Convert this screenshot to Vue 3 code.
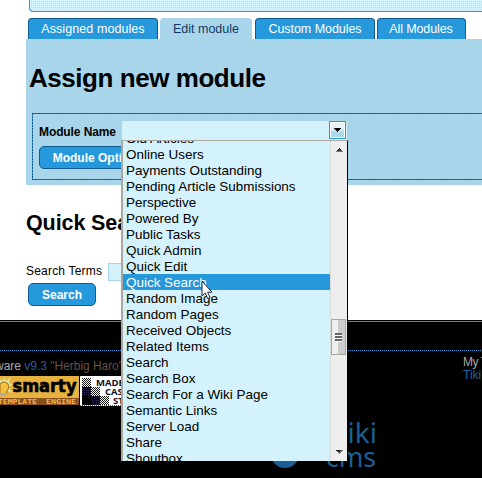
<script setup>
const tabs = [
  { label: 'Assigned modules', size: 'assigned' },
  { label: 'Edit module', size: 'edit' },
  { label: 'Custom Modules', size: 'custom' },
  { label: 'All Modules', size: 'all' },
]
const options = [
  'Old Articles', 'Online Users', 'Payments Outstanding', 'Pending Article Submissions',
  'Perspective', 'Powered By', 'Public Tasks', 'Quick Admin', 'Quick Edit', 'Quick Search',
  'Random Image', 'Random Pages', 'Received Objects', 'Related Items', 'Search', 'Search Box',
  'Search For a Wiki Page', 'Semantic Links', 'Server Load', 'Share', 'Shoutbox',
]
const selected = 'Quick Search'
</script>

<template>
  <div class="page">
    <div class="notice"></div>
    <nav class="tabs">
      <a v-for="t in tabs" :key="t.label" class="tab" :class="t.size">{{ t.label }}</a>
    </nav>
    <section class="panel">
      <h1>Assign new module</h1>
      <div class="fieldset">
        <div class="row">
          <label>Module Name</label>
          <div class="select">
            <span class="drop">
              <svg width="7" height="4" viewBox="0 0 7 4" shape-rendering="crispEdges"><path d="M0 0h7v1H6v1H5v1H4v1H3V3H2V2H1V1H0z" /></svg>
            </span>
            <div class="popup">
              <div class="list">
                <div v-for="o in options" :key="o" class="option" :class="{ active: o === selected }"><span>{{ o }}</span></div>
              </div>
              <div class="scroll">
                <svg class="arrow" width="7" height="4" viewBox="0 0 7 4"><path d="M3 0h1v1h1v1h1v1h1v1H0V3h1V2h1V1h1z" fill="#777" /><path d="M3 0h1v1h1v2H1V2h1V1h1z" fill="#233" /></svg>
                <span class="thumb"><i></i><i></i><i></i></span>
                <svg class="arrow down" width="7" height="4" viewBox="0 0 7 4"><path d="M0 0h7v1H6v1H5v1H4v1H3V3H2V2H1V1H0z" fill="#777" /><path d="M0 0h5v1H4v1H2V1H0z" fill="#222" /></svg>
              </div>
              <svg class="cursor" width="13" height="20" viewBox="0 0 13 20"><path d="M1 1v15l3.2-3 2.5 5.6 2.4-1.1-2.5-5.3H11z" fill="#fff" stroke="#23233f" stroke-width="1" /></svg>
            </div>
          </div>
        </div>
        <button class="button options">Module Options</button>
      </div>
    </section>
    <section class="search">
      <h2>Quick Search</h2>
      <div class="terms"><span>Search Terms</span><span class="input"></span></div>
      <button class="button go">Search</button>
    </section>
    <footer>
      <div class="divider"></div>
      <div class="columns">
        <div class="left">
          <p class="powered">ware <span>v9.3 <em>"Herbig Haro"</em></span></p>
          <div class="badges">
            <svg width="79" height="29" viewBox="0 0 79 29">
              <rect width="79" height="29" fill="#e7b23e" />
              <rect y="22" width="79" height="7" fill="#89501d" />
              <path d="M0 3l3 2 1-5 2 5 5-4-2 6 4 1-4 3 3 6-5-2-1 5H0z" fill="#d9e5a0" />
              <path d="M0 8q4-4 8 0 2 4-1 7l-1 3H0z" fill="#f1c23e" stroke="#a66b20" />
              <path d="M0 17h6v3H0z" fill="#a8acb0" />
              <text x="12.5" y="16" textLength="64" lengthAdjust="spacingAndGlyphs" class="smarty">smarty</text>
              <text x="-2" y="28" textLength="39" lengthAdjust="spacingAndGlyphs" class="engine">TEMPLATE</text>
              <text x="46" y="28" textLength="30" lengthAdjust="spacingAndGlyphs" class="engine">ENGINE</text>
            </svg>
            <svg width="88" height="30" viewBox="0 0 88 30" shape-rendering="crispEdges">
              <defs>
                <pattern id="check" width="2" height="2" patternUnits="userSpaceOnUse"><rect width="2" height="2" fill="#fff" /><path d="M0 0h1v1H0zM1 1h1v1H1z" fill="#111" /></pattern>
                <pattern id="violet" width="4" height="4" patternUnits="userSpaceOnUse"><rect width="4" height="4" fill="#08000e" /><path d="M0 0h1v1H0zM2 2h1v1H2z" fill="#46203e" /><path d="M2 0h1v1H2zM0 2h1v1H0z" fill="#123858" /></pattern>
              </defs>
              <rect width="88" height="30" fill="#fff" />
              <rect x="2" y="2" width="9" height="9" fill="url(#check)" />
              <rect x="2" y="11" width="9" height="9" fill="url(#violet)" />
              <rect x="11" y="11" width="9" height="9" fill="url(#check)" />
              <path d="M2 20h9v9H2z" />
              <rect x="11" y="20" width="9" height="9" fill="url(#violet)" />
              <rect x="20" y="20" width="9" height="9" fill="url(#check)" />
              <path d="M0 29.5h88" stroke="#67466b" stroke-dasharray="1 1" />
              <text x="16" y="9.5" class="made">MADE WITH</text>
              <text x="25" y="18.5" class="made">CASCADING</text>
              <text x="33" y="27.5" class="made">STYLE</text>
            </svg>
          </div>
        </div>
        <div class="theme">My Theme<br /><span>Tiki</span></div>
      </div>
      <svg class="logo" width="140" height="58" viewBox="0 0 140 58">
        <circle cx="20" cy="34" r="14" fill="#1c5f95" />
        <text x="67" y="23" textLength="45" lengthAdjust="spacingAndGlyphs" class="tiki">Tiki</text>
        <text x="61" y="47" textLength="50" lengthAdjust="spacingAndGlyphs" class="tiki">cms</text>
        <text x="65" y="67" textLength="68" lengthAdjust="spacingAndGlyphs" class="group">groupware</text>
      </svg>
    </footer>
  </div>
</template>

<style>
body { margin: 0; overflow: hidden; background: #fff; }
</style>
<style scoped>
* { box-sizing: border-box; }
.page { width: 482px; height: 478px; overflow: hidden; display: flex; flex-direction: column; font: 12px/16px "Liberation Sans", Arial, sans-serif; color: #000; }
.notice { height: 12px; flex: none; margin: 0 -5px 0 29px; border: 1px solid #2698dc; border-top: 0; border-radius: 0 0 4px 4px; background: conic-gradient(#d4f2fb 25%, #b2dcef 0 50%, #d4f2fb 0) 0 0 / 2px 2px; }
.tabs { display: flex; height: 21px; flex: none; margin: 6px 0 0 28px; }
.tab { height: 21px; border: 1px solid #105b91; border-bottom: 0; border-radius: 4px 4px 0 0; background: #2698dc; color: #fff; font-size: 12.5px; line-height: 20px; text-align: center; white-space: nowrap; }
.assigned { width: 130px; margin-right: 2px; letter-spacing: .08px; }
.edit { width: 92px; margin-right: 3px; background: #a9d5eb; border-color: #a9d5eb; color: #123a66; }
.custom { width: 120px; margin-right: 2px; letter-spacing: -.05px; }
.all { width: 89px; letter-spacing: -.1px; padding-right: 1px; }
.panel { height: 146px; flex: none; margin-left: 26px; background: #a9d5eb; padding: 24px 0 0 6px; }
h1 { margin: 0 0 20px -3px; font-size: 26px; line-height: 30px; letter-spacing: -.45px; }
.fieldset { height: 67px; margin-right: -5px; padding: 8px 0 0 7px; background:
  repeating-linear-gradient(90deg, #105b91 0 2px, #2c82b8 2px 3px) 0 0 / 100% 1px no-repeat,
  repeating-linear-gradient(90deg, #105b91 0 2px, #2c82b8 2px 3px) 0 100% / 100% 1px no-repeat,
  repeating-linear-gradient(#105b91 0 2px, #4b9cca 2px 3px) 0 0 / 1px 100% no-repeat; }
.row { display: flex; height: 19px; }
label { width: 83px; flex: none; font-weight: bold; font-size: 12px; line-height: 22px; letter-spacing: -.1px; }
.select { position: relative; width: 225px; height: 19px; background: #d4f2fb; display: flex; justify-content: flex-end; }
.drop { width: 17px; height: 18px; margin-right: 1px; border: 1px solid #2698dc; background: linear-gradient(#e7f5fa 35%, #add8ec 65%); box-shadow: inset 0 0 0 1px #fff; display: flex; align-items: center; justify-content: center; }
.popup { position: absolute; z-index: 2; left: -1px; top: 19px; width: 227px; height: 321px; background: #d4f2fb; border: 1px solid #aaa6a0; border-left: 2px solid #aaa6a0; border-bottom: 0; border-right: 1px solid #000; display: flex; }
.list { width: 207px; height: 320px; overflow: hidden; font-size: 13.45px; display: flex; flex-direction: column; }
.option { flex: none; height: 16px; line-height: 18px; padding-left: 3px; white-space: nowrap; }
.option:first-child { margin-top: -11px; }
.active { background: #2698dc; color: #fff; }
.scroll { width: 17px; height: 320px; background: #eee; border-left: 1px dotted #c8c8c8; display: flex; flex-direction: column; align-items: center; justify-content: space-between; padding: 7px 0; }
.thumb { width: 15px; height: 36px; margin-right: 1px; margin-top: 164px; margin-bottom: 92px; border: 1px solid #aaa6a0; background: linear-gradient(90deg, #eee 50%, #ccc 50%); display: flex; flex-direction: column; align-items: center; justify-content: center; }
.thumb i { width: 7px; height: 3px; background: #666; border-bottom: 1px solid #fff; }
.cursor { position: absolute; left: 78px; top: 139px; }
.button { display: block; border: 1px solid #105b91; border-radius: 5px; background: #2698dc; color: #fff; font: bold 12px/20px "Liberation Sans", Arial, sans-serif; padding: 0; text-align: center; white-space: nowrap; }
.options { width: 118px; height: 23px; margin-top: 6px; }
.search { height: 135px; flex: none; padding: 25px 0 0 26px; }
h2 { margin: 0; font-size: 21.5px; line-height: 26px; letter-spacing: -.1px; }
.terms { display: flex; margin-top: 27px; height: 18px; line-height: 16px; }
.terms span:first-child { width: 82px; white-space: nowrap; letter-spacing: .2px; }
.input { width: 140px; height: 18px; background: #d4f2fb; border: 1px solid #a9d5eb; }
.go { width: 68px; height: 23px; margin: 2px 0 0 2px; }
footer { position: relative; flex: 1; background: #000; border-top: 1px solid #000; }
footer::before { content: ""; display: block; height: 1px; background: #2698dc; }
.divider { height: 1px; margin-top: 28px; background: repeating-linear-gradient(90deg, #2698dc 0 1px, #000 1px 2px); }
.columns { display: flex; justify-content: space-between; }
.powered { margin: 7px 0 2px -5px; color: #aaa; white-space: nowrap; line-height: 16px; }
.powered span { color: #2c5f8c; }
.powered em { font-style: normal; color: #64504c; letter-spacing: -.05px; }
.badges { display: flex; gap: 1px; }
.smarty { font: bold 18px "DejaVu Sans", sans-serif; fill: #000; stroke: #000; stroke-width: .7px; }
.engine { font: bold 7px "DejaVu Sans Mono", monospace; fill: #f2b544; }
.made { font: bold 9.5px "Open Sans", sans-serif; fill: #111125; }
.theme { width: 19px; margin-top: 5px; line-height: 12.5px; color: #aaa; white-space: nowrap; overflow: hidden; letter-spacing: -.4px; }
.theme span { color: #1c659e; letter-spacing: 0; }
.logo { position: absolute; left: 265px; top: 99px; }
.tiki { font: 27px "Noto Sans", sans-serif; fill: #1c5f95; }
.group { font: 14px "Noto Sans", sans-serif; fill: #46274d; }
</style>
